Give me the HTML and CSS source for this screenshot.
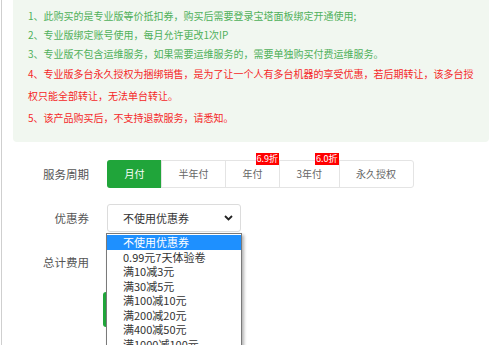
FILE: index.html
```html
<!DOCTYPE html>
<html lang="zh-CN">
<head>
<meta charset="utf-8">
<title>购买专业版</title>
<link rel="stylesheet" href="styles.css">
</head>
<body>
<div class="page">
  <div class="notice">
    <p class="tip ok">1、此购买的是专业版等价抵扣券，购买后需要登录宝塔面板绑定开通使用;</p>
    <p class="tip ok">2、专业版绑定账号使用，每月允许更改1次IP</p>
    <p class="tip ok">3、专业版不包含运维服务，如果需要运维服务的，需要单独购买付费运维服务。</p>
    <p class="tip warn">4、专业版多台永久授权为捆绑销售，是为了让一个人有多台机器的享受优惠，若后期转让，该多台授权只能全部转让，无法单台转让。</p>
    <p class="tip warn">5、该产品购买后，不支持退款服务，请悉知。</p>
  </div>

  <div class="form">
    <div class="row">
      <div class="label">服务周期</div>
      <div class="cycles">
        <div class="cycle active">月付</div>
        <div class="cycle">半年付</div>
        <div class="cycle">年付<span class="badge">6.9折</span></div>
        <div class="cycle">3年付<span class="badge">6.0折</span></div>
        <div class="cycle">永久授权</div>
      </div>
    </div>

    <div class="row">
      <div class="label">优惠券</div>
      <div class="select-wrap">
        <div class="select">
          <span>不使用优惠券</span>
          <svg class="chev" width="9" height="6" viewBox="0 0 9 6"><polyline points="1,1 4.5,4.5 8,1" fill="none" stroke="#222" stroke-width="1.8"/></svg>
        </div>
        <ul class="options">
          <li class="sel">不使用优惠券</li>
          <li>0.99元7天体验卷</li>
          <li>满10减3元</li>
          <li>满30减5元</li>
          <li>满100减10元</li>
          <li>满200减20元</li>
          <li>满400减50元</li>
          <li>满1000减100元</li>
        </ul>
      </div>
    </div>

    <div class="row">
      <div class="label">总计费用</div>
      <div class="total"></div>
    </div>

    <div class="buy-row">
      <div class="buy"></div>
    </div>
  </div>
</div>
</body>
</html>
```

FILE: styles.css
```css
html, body {
  margin: 0;
  padding: 0;
  background: #fff;
}
body {
  width: 500px;
  height: 345px;
  overflow: hidden;
  font-family: "Noto Sans CJK SC", "Noto Sans", sans-serif;
}
.page {
  margin-left: 1px;
  border-left: 1px solid #cfcfcf;
  padding: 0 11px 0 11px;
  height: 345px;
  box-sizing: border-box;
}
.notice {
  background: #f1f7f0;
  border-radius: 0 0 4px 4px;
  padding: 5.5px 10px 13px 15px;
}
.tip {
  margin: 0;
  font-size: 10px;
}
.tip.ok {
  color: #4fb05a;
  line-height: 19px;
}
.tip.warn {
  color: #f52828;
  line-height: 22px;
}
.form {
  margin-top: 18px;
}
.row {
  display: flex;
  align-items: center;
  height: 28px;
  margin-bottom: 16px;
}
.label {
  width: 76px;
  margin-right: 18px;
  text-align: right;
  font-size: 11.5px;
  color: #555;
}
.cycles {
  display: flex;
  height: 28px;
  box-sizing: border-box;
  border: 1px solid #e4e4e4;
  border-radius: 3px;
}
.cycle {
  position: relative;
  padding: 0 16.5px;
  line-height: 26px;
  font-size: 10px;
  color: #666;
  border-left: 1px solid #e4e4e4;
  white-space: nowrap;
}
.cycle:first-child {
  border-left: none;
}
.cycle.active {
  background: #20a53a;
  color: #fff;
  margin: -1px 0 -1px -1px;
  padding-left: 17.5px;
  line-height: 28px;
  border-radius: 3px 0 0 3px;
}
.badge {
  position: absolute;
  top: -8px;
  right: 0;
  height: 12px;
  line-height: 12px;
  padding: 0 1px;
  font-size: 9px;
  color: #fff;
  background: #f00;
}
.select-wrap {
  position: relative;
}
.select {
  width: 134px;
  height: 28px;
  box-sizing: border-box;
  border: 1px solid #dcdcdc;
  border-radius: 3px;
  display: flex;
  align-items: center;
  justify-content: space-between;
  padding: 0 7px 0 15px;
  font-size: 11px;
  color: #333;
}
.chev {
  display: block;
}
.options {
  position: absolute;
  left: -1px;
  top: calc(100% + 1px);
  width: 136px;
  box-sizing: border-box;
  margin: 0;
  padding: 1px 0 0 0;
  list-style: none;
  background: #fff;
  border: 1px solid #7a7a7a;
  box-shadow: 2px 2px 3px rgba(0, 0, 0, 0.3);
  font-size: 11px;
  color: #333;
  z-index: 5;
}
.options li {
  height: 14.6px;
  line-height: 14.6px;
  padding-left: 16px;
  white-space: nowrap;
}
.options li.sel {
  background: #1e90ff;
  color: #fff;
  height: 15px;
  line-height: 15px;
}
.buy-row {
  margin-top: 6px;
  padding-left: 90px;
}
.buy {
  width: 110px;
  height: 35px;
  background: #20a53a;
  border-radius: 3px;
}
```
